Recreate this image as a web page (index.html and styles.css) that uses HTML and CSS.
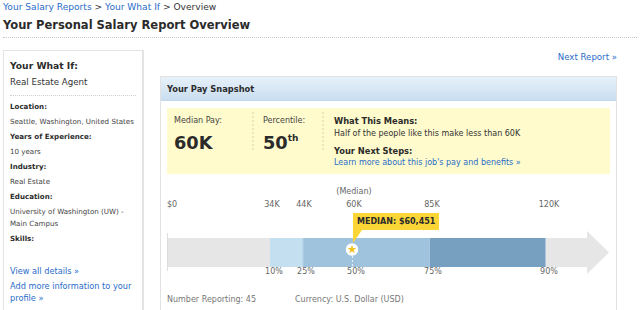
FILE: index.html
```html
<!DOCTYPE html>
<html>
<head>
<meta charset="utf-8">
<link rel="stylesheet" href="styles.css">
</head>
<body>
<div class="page">
  <div class="crumbs"><a class="link" href="#">Your Salary Reports</a> &gt; <a class="link" href="#">Your What If</a> &gt; Overview</div>
  <h1 class="title">Your Personal Salary Report Overview</h1>
  <div class="main">
    <aside class="sidebar">
      <h2 class="side-head">Your What If:</h2>
      <div class="side-job">Real Estate Agent</div>
      <dl class="details">
        <dt>Location:</dt>
        <dd>Seattle, Washington, United States</dd>
        <dt>Years of Experience:</dt>
        <dd>10 years</dd>
        <dt>Industry:</dt>
        <dd>Real Estate</dd>
        <dt>Education:</dt>
        <dd>University of Washington (UW) - Main Campus</dd>
        <dt>Skills:</dt>
        <dd class="empty"></dd>
      </dl>
      <div class="side-links">
        <a class="link" href="#">View all details »</a>
        <a class="link" href="#">Add more information to your profile »</a>
      </div>
    </aside>
    <section class="content">
      <div class="next"><a class="link next-link" href="#">Next Report »</a></div>
      <div class="panel">
        <div class="panel-head">Your Pay Snapshot</div>
        <div class="panel-body">
          <div class="snap">
            <div class="snap-col col-pay">
              <div class="snap-label">Median Pay:</div>
              <div class="snap-value">60K</div>
            </div>
            <div class="snap-col col-pct">
              <div class="snap-label">Percentile:</div>
              <div class="snap-value">50<sup>th</sup></div>
            </div>
            <div class="snap-info">
              <div class="info-head">What This Means:</div>
              <div class="info-text">Half of the people like this make less than 60K</div>
              <div class="info-head second">Your Next Steps:</div>
              <a class="link info-link" href="#">Learn more about this job's pay and benefits »</a>
            </div>
          </div>
          <div class="chart">
            <div class="median-cap" style="left:187px">(Median)</div>
            <div class="axis-label first" style="left:0px">$0</div>
            <div class="axis-label" style="left:105px">34K</div>
            <div class="axis-label" style="left:137px">44K</div>
            <div class="axis-label" style="left:187px">60K</div>
            <div class="axis-label" style="left:265px">85K</div>
            <div class="axis-label" style="left:382px">120K</div>
            <svg class="bar" width="443" height="48" viewBox="0 0 443 48">
              <line x1="0.5" y1="5" x2="0.5" y2="43" stroke="#dcdcdc" stroke-width="1"/>
              <rect x="1" y="10" width="420" height="29" fill="#e6e6e6"/>
              <polygon points="420,3 442,24.5 420,46" fill="#e6e6e6"/>
              <rect x="103" y="10" width="33" height="29" fill="#c4dfef"/>
              <rect x="136" y="10" width="126" height="29" fill="#9fc3dd"/>
              <rect x="262" y="10" width="116" height="29" fill="#779fc0"/>
              <line x1="136" y1="10" x2="136" y2="39" stroke="#b4d2e6" stroke-width="1"/>
              <line x1="262.5" y1="10" x2="262.5" y2="39" stroke="#a8c6de" stroke-width="1"/>
              <line x1="378.5" y1="10" x2="378.5" y2="39" stroke="#a9c4da" stroke-width="1"/>
              <line x1="185.5" y1="28" x2="185.5" y2="39" stroke="#e8f1f8" stroke-width="1" stroke-dasharray="2,2"/>
            </svg>
            <div class="marker" style="left:185px">
              <svg width="13" height="13" viewBox="0 0 13 13">
                <circle cx="6.5" cy="6.5" r="6.3" fill="#ffffff"/>
                <polygon points="6.5,2 7.6,5.1 10.8,5.1 8.2,7 9.2,10.2 6.5,8.3 3.8,10.2 4.8,7 2.2,5.1 5.4,5.1" fill="#f3c21b"/>
              </svg>
            </div>
            <div class="callout" style="left:186px">MEDIAN: $60,451</div>
            <div class="pct-label" style="left:107px">10%</div>
            <div class="pct-label" style="left:139px">25%</div>
            <div class="pct-label" style="left:189px">50%</div>
            <div class="pct-label" style="left:266px">75%</div>
            <div class="pct-label" style="left:382px">90%</div>
          </div>
          <div class="chart-foot">
            <span>Number Reporting: 45</span>
            <span class="currency">Currency: U.S. Dollar (USD)</span>
          </div>
        </div>
      </div>
    </section>
  </div>
</div>
</body>
</html>
```
FILE: styles.css
```css
* { box-sizing: border-box; }
html, body { margin: 0; padding: 0; background: #ffffff; }
body {
  font-family: "DejaVu Sans", Verdana, sans-serif;
  color: #333333;
  width: 640px;
  height: 310px;
  overflow: hidden;
}
a, a:visited, .link, .link:visited { color: #2a6cc8; text-decoration: none; }
.page { padding: 0 23px 0 3px; }

.crumbs {
  font-size: 9.1px;
  line-height: 14px;
  color: #333;
}
.title {
  margin: 3px 0 0 0;
  font-size: 11.5px;
  font-weight: bold;
  line-height: 16px;
  color: #2b2b2b;
  padding-bottom: 4px;
  border-bottom: 1px dotted #c8c8c8;
  margin-right: -20px;
}

.main {
  display: flex;
  gap: 16px;
  align-items: flex-start;
}

.sidebar {
  width: 141px;
  margin-top: 12px;
  border: 1px solid #e4e4e4;
  border-right-width: 2px;
  padding: 8px 1px 0 6px;
  height: 270px;
}
.side-head {
  margin: 0;
  font-size: 9.2px;
  font-weight: bold;
  line-height: 14px;
  color: #2b2b2b;
}
.side-job {
  font-size: 8.7px;
  line-height: 15px;
  margin-top: 2px;
  margin-right: 5px;
  padding-bottom: 5px;
  border-bottom: 1px dotted #cfcfcf;
  margin-bottom: 5px;
}
.details { margin: 0; font-size: 7.1px; }
.details dt {
  font-weight: bold;
  line-height: 12px;
  margin-bottom: 3px;
  color: #2b2b2b;
}
.details dd {
  margin: 0 0 3px 0;
  line-height: 12px;
  color: #444;
}
.details dd.empty { height: 14px; }
.side-links {
  display: flex;
  flex-direction: column;
  gap: 3px;
  font-size: 8.2px;
  line-height: 12px;
  padding-bottom: 6px;
  margin-right: 3px;
  border-bottom: 1px dotted #cfcfcf;
}

.content { flex: 1; }
.next {
  text-align: right;
  font-size: 8.6px;
  line-height: 12px;
  margin-top: 13px;
  margin-bottom: 13px;
}
.next-link { color: #2a6cc8; }
.panel {
  border: 1px solid #e2e2e2;
  height: 300px;
}
.panel-head {
  height: 24px;
  line-height: 25px;
  padding-left: 6px;
  font-size: 8.3px;
  font-weight: bold;
  color: #2b2b2b;
  background: linear-gradient(#e7f1f9, #c9def0);
  border-bottom: 1px solid #c3d9ec;
}
.panel-body { padding: 7px 6px 0 6px; }

.snap {
  display: flex;
  background: #fffbcc;
  height: 66px;
  padding-left: 7px;
}
.snap-col {
  margin-top: 4px;
  height: 38px;
  border-right: 2px dotted #ebe6bd;
}
.col-pay { width: 80px; }
.col-pct { width: 70px; padding-left: 9px; }
.snap-label {
  font-size: 8px;
  line-height: 10px;
  margin-top: 4px;
  color: #444;
}
.snap-value {
  font-size: 17.8px;
  font-weight: bold;
  line-height: 22px;
  margin-top: 6px;
  color: #2b2b2b;
}
.snap-value sup {
  font-size: 9px;
  vertical-align: 8px;
  line-height: 0;
}
.snap-info {
  padding: 8px 0 0 10px;
  font-size: 8px;
}
.info-head {
  font-weight: bold;
  font-size: 8.3px;
  line-height: 11px;
  color: #2b2b2b;
}
.info-head.second { margin-top: 6px; }
.info-text { line-height: 12px; color: #333; margin-top: 1px; }
.info-link { display: block; line-height: 12px; }

.chart {
  position: relative;
  height: 100px;
  margin-top: 10px;
  font-size: 8px;
  color: #666;
}
.median-cap, .axis-label, .pct-label {
  position: absolute;
  line-height: 10px;
  transform: translateX(-50%);
  white-space: nowrap;
}
.median-cap { top: 3px; }
.axis-label { top: 16px; }
.axis-label.first { transform: none; }
.pct-label { top: 83px; }
.bar {
  position: absolute;
  left: 0;
  top: 44px;
  display: block;
}
.marker {
  position: absolute;
  top: 59px;
  width: 13px;
  height: 13px;
  transform: translateX(-50%);
}
.marker svg { display: block; }
.callout {
  position: absolute;
  top: 29px;
  height: 17px;
  line-height: 17px;
  padding: 0 4px;
  background: #fcd536;
  color: #2b2b2b;
  font-weight: bold;
  font-size: 8px;
  white-space: nowrap;
}
.callout::after {
  content: "";
  position: absolute;
  left: 0;
  top: 100%;
  border-top: 13px solid #fcd536;
  border-right: 9px solid transparent;
}
.chart-foot {
  display: flex;
  font-size: 8px;
  line-height: 10px;
  color: #777;
  margin-top: 11px;
}
.currency { margin-left: 39px; }
```
